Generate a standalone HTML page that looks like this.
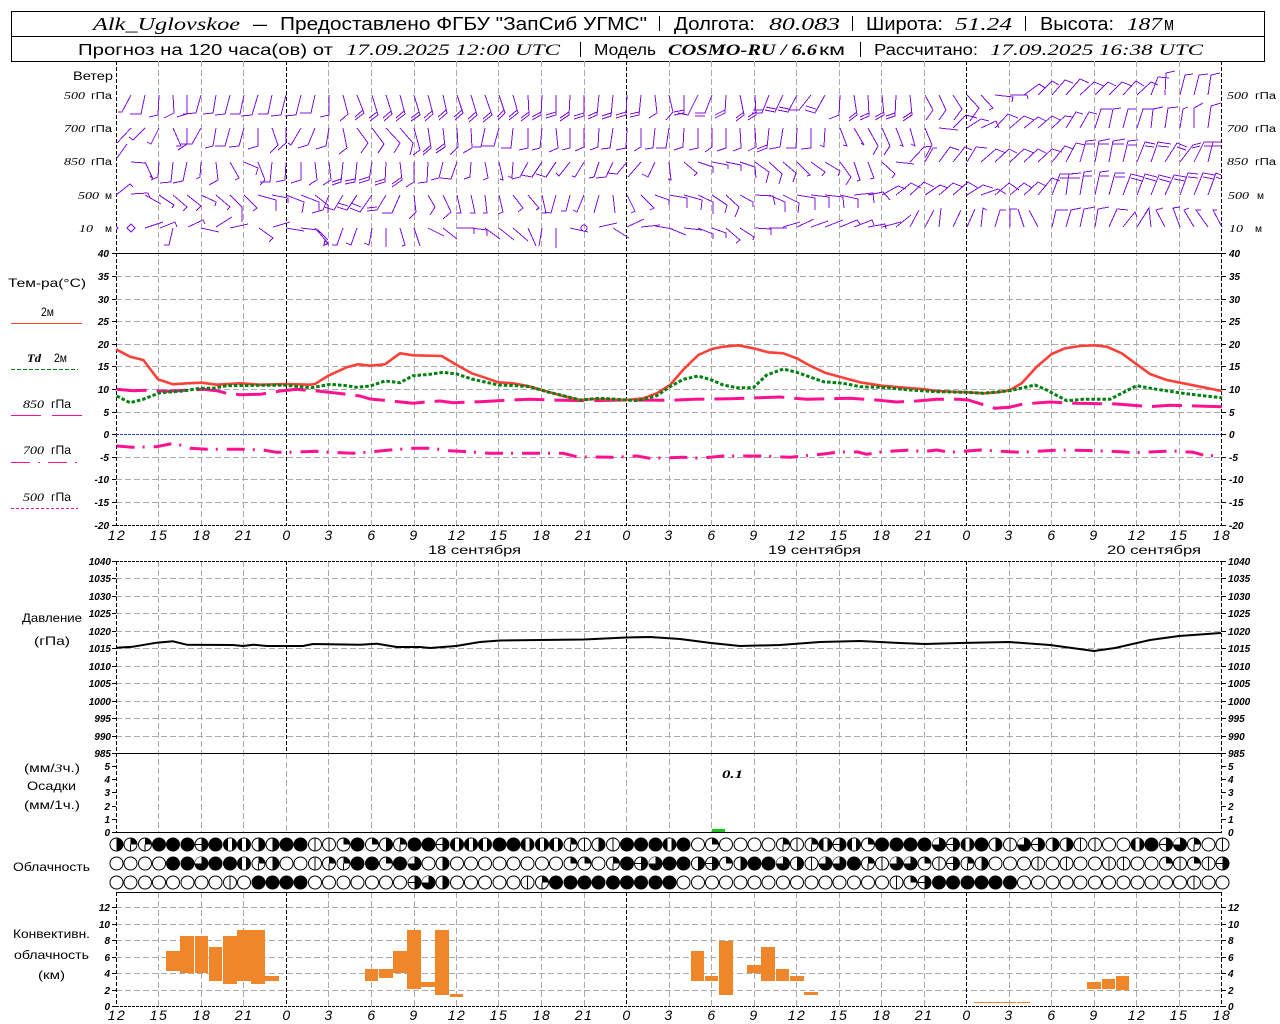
<!DOCTYPE html>
<html lang="ru"><head><meta charset="utf-8"><title>Alk_Uglovskoe</title>
<style>
html,body{margin:0;padding:0;background:#fff}
svg{display:block}
text{font-family:"Liberation Sans",sans-serif;fill:#000}
.i{font-family:"Liberation Serif",serif;font-style:italic}
.h1{font-size:18px}.h2{font-size:16px}
.iy text{font-family:"Liberation Sans",sans-serif;font-style:italic;font-weight:bold;font-size:10px}
.hr text{font-family:"Liberation Sans",sans-serif;font-style:italic;font-size:14px;letter-spacing:1.5px;text-anchor:middle}
.l text{font-size:12px}
.w text{font-size:10px}
.c circle,.c path{shape-rendering:crispEdges}
</style></head><body>
<svg xmlns="http://www.w3.org/2000/svg" width="1280" height="1024" viewBox="0 0 1280 1024">
<defs>
<clipPath id="wc"><rect x="116" y="61" width="1107" height="192"/></clipPath>
<path id="gv" d="M0 61V525M0 561V832M0 892V1006" fill="none" stroke="#aaa" stroke-dasharray="6 3" shape-rendering="crispEdges"/>
<g id="a"><circle r="6.5" fill="#fff" stroke="#000"/></g>
<g id="b"><circle r="6.5" fill="#fff" stroke="#000"/><path d="M0-6.5V6.5" stroke="#000"/></g>
<g id="c"><circle r="6.5" fill="#fff" stroke="#000"/><path d="M0 0V-6.5A6.5 6.5 0 0 1 6.5 0Z"/></g>
<g id="d"><circle r="6.5" fill="#fff" stroke="#000"/><path d="M0 0V-6.5A6.5 6.5 0 0 1 6.5 0Z"/><path d="M0 0V6.5" stroke="#000"/></g>
<g id="e"><circle r="6.5" fill="#fff" stroke="#000"/><path d="M0-6.5A6.5 6.5 0 0 1 0 6.5Z"/></g>
<g id="f"><circle r="6.5" fill="#fff" stroke="#000"/><path d="M0-6.5A6.5 6.5 0 0 1 0 6.5Z"/><path d="M-6.5 0H0" stroke="#000"/></g>
<g id="g"><circle r="6.5" fill="#000" stroke="#000"/><path d="M0 0V-6.5A6.5 6.5 0 0 0 -6.5 0Z" fill="#fff"/></g>
<g id="h"><circle r="6.5" fill="#000" stroke="#000"/><rect x="-2" y="-6" width="4" height="12" fill="#fff"/></g>
<g id="k"><circle r="6.5" fill="#000" stroke="#000"/></g>
</defs>

<!-- header -->
<g fill="none" stroke="#000" shape-rendering="crispEdges"><rect x="11.5" y="11.5" width="1253" height="50"/><path d="M11.5 36.5H1264.5M659.5 16V31M852.5 16V31M1025.5 16V31M580.5 42V57M860.5 42V57"/></g>
<text class="h1 i" x="93" y="30" textLength="147" lengthAdjust="spacingAndGlyphs" font-size="19">Alk_Uglovskoe</text>
<text class="h1" x="253" y="30" textLength="14" lengthAdjust="spacingAndGlyphs">–</text>
<text class="h1" x="280" y="30" textLength="367" lengthAdjust="spacingAndGlyphs">Предоставлено ФГБУ "ЗапСиб УГМС"</text>
<text class="h1" x="674" y="30" textLength="81" lengthAdjust="spacingAndGlyphs">Долгота:</text>
<text class="h1 i" x="769" y="30" textLength="71" lengthAdjust="spacingAndGlyphs">80.083</text>
<text class="h1" x="866" y="30" textLength="77" lengthAdjust="spacingAndGlyphs">Широта:</text>
<text class="h1 i" x="955" y="30" textLength="57" lengthAdjust="spacingAndGlyphs">51.24</text>
<text class="h1" x="1040" y="30" textLength="74" lengthAdjust="spacingAndGlyphs">Высота:</text>
<text class="h1 i" x="1127" y="30" textLength="35" lengthAdjust="spacingAndGlyphs">187</text>
<text class="h1" x="1164" y="30" textLength="10" lengthAdjust="spacingAndGlyphs">м</text>
<text class="h2" x="78" y="55" textLength="255" lengthAdjust="spacingAndGlyphs">Прогноз на 120 часа(ов) от</text>
<text class="h2 i" x="346" y="55" textLength="214" lengthAdjust="spacingAndGlyphs">17.09.2025 12:00 UTC</text>
<text class="h2" x="594" y="55" textLength="62" lengthAdjust="spacingAndGlyphs">Модель</text>
<text class="h2 i" x="668" y="55" textLength="149" lengthAdjust="spacingAndGlyphs" font-weight="bold">COSMO-RU / 6.6</text>
<text class="h2" x="819" y="55" textLength="26" lengthAdjust="spacingAndGlyphs">км</text>
<text class="h2" x="874" y="55" textLength="104" lengthAdjust="spacingAndGlyphs">Рассчитано:</text>
<text class="h2 i" x="990" y="55" textLength="213" lengthAdjust="spacingAndGlyphs">17.09.2025 16:38 UTC</text>

<!-- grid -->
<use href="#gv" x="158.5"/><use href="#gv" x="201.5"/><use href="#gv" x="243.5"/><use href="#gv" x="328.5"/><use href="#gv" x="371.5"/><use href="#gv" x="414.5"/><use href="#gv" x="456.5"/><use href="#gv" x="498.5"/><use href="#gv" x="541.5"/><use href="#gv" x="584.5"/><use href="#gv" x="669.5"/><use href="#gv" x="711.5"/><use href="#gv" x="754.5"/><use href="#gv" x="796.5"/><use href="#gv" x="839.5"/><use href="#gv" x="881.5"/><use href="#gv" x="924.5"/><use href="#gv" x="1009.5"/><use href="#gv" x="1051.5"/><use href="#gv" x="1094.5"/><use href="#gv" x="1136.5"/><use href="#gv" x="1179.5"/>
<path d="M286.5 753V832M626.5 753V832M966.5 753V832" stroke="#aaa" stroke-dasharray="6 3" fill="none" shape-rendering="crispEdges"/>
<path fill="none" stroke="#aaa" stroke-dasharray="6 3" shape-rendering="crispEdges" d="M116 276.5H1221M116 299.5H1221M116 321.5H1221M116 344.5H1221M116 366.5H1221M116 389.5H1221M116 412.5H1221M116 457.5H1221M116 479.5H1221M116 502.5H1221M116 578.5H1221M116 596.5H1221M116 613.5H1221M116 631.5H1221M116 648.5H1221M116 666.5H1221M116 683.5H1221M116 701.5H1221M116 718.5H1221M116 736.5H1221M116 907.5H1221M116 924.5H1221M116 940.5H1221M116 957.5H1221M116 973.5H1221M116 990.5H1221"/>
<path fill="none" stroke="#000" stroke-dasharray="4 2" shape-rendering="crispEdges" d="M116.5 61V525M116.5 561V832M116.5 892V1006M286.5 61V525M286.5 561V753M286.5 892V1006M626.5 61V525M626.5 561V753M626.5 892V1006M966.5 61V525M966.5 561V753M966.5 892V1006M1221.5 61V525M1221.5 561V832M1221.5 892V1006"/>
<path fill="none" stroke="#000" stroke-dasharray="3 1" shape-rendering="crispEdges" d="M116 525.5H1222M116 561.5H1222M116 1006.5H1222"/>
<path fill="none" stroke="#000" shape-rendering="crispEdges" d="M112 253.5H1226M112 753.5H1226M112 832.5H1222M116 892.5H1222"/>
<path fill="none" stroke="#2040ff" stroke-dasharray="3 1" shape-rendering="crispEdges" d="M116 434.5H1221"/>
<path fill="none" stroke="#000" shape-rendering="crispEdges" d="M112 276.5h4M112 299.5h4M112 321.5h4M112 344.5h4M112 366.5h4M112 389.5h4M112 412.5h4M112 434.5h4M112 457.5h4M112 479.5h4M112 502.5h4M112 525.5h4M112 561.5h4M112 578.5h4M112 596.5h4M112 613.5h4M112 631.5h4M112 648.5h4M112 666.5h4M112 683.5h4M112 701.5h4M112 718.5h4M112 736.5h4M112 766.5h4M112 779.5h4M112 792.5h4M112 806.5h4M112 819.5h4M112 907.5h4M112 924.5h4M112 940.5h4M112 957.5h4M112 973.5h4M112 990.5h4M112 1006.5h4M1221 276.5h5M1221 299.5h5M1221 321.5h5M1221 344.5h5M1221 366.5h5M1221 389.5h5M1221 412.5h5M1221 434.5h5M1221 457.5h5M1221 479.5h5M1221 502.5h5M1221 525.5h5M1221 561.5h5M1221 578.5h5M1221 596.5h5M1221 613.5h5M1221 631.5h5M1221 648.5h5M1221 666.5h5M1221 683.5h5M1221 701.5h5M1221 718.5h5M1221 736.5h5M1221 766.5h5M1221 779.5h5M1221 792.5h5M1221 806.5h5M1221 819.5h5M1221 907.5h5M1221 924.5h5M1221 940.5h5M1221 957.5h5M1221 973.5h5M1221 990.5h5M1221 1006.5h5"/>

<!-- wind barbs -->
<g clip-path="url(#wc)" fill="none" stroke="#8010e0" shape-rendering="crispEdges">
<path d="M131 95l-9 17l-4 0M145 95l-4 19l-11 0M159 95l-1 20l-9 2M173 95l1 18l-10 5M187 95l0 19l-10 3M201 95l-5 18l-13 1M216 95l-3 18l-10 1M230 95l-5 19l-10 1M244 95l-4 19l-10 0M258 95l-6 20l-11 1M272 95l-4 19l-10 0M286 95l-5 20l-10 1M301 95l-5 20l-11 1M315 95l-4 18l-11 0M329 95l0 20l-9 2M343 95l5 19l-8 7M357 95l7 18l-9 7m8-10l-8 7M372 95l6 20l-8 6m7-9l-8 6M386 95l6 19l-8 7m7-10l-8 7M400 95l5 19l-9 7m8-10l-8 7M414 95l6 20l-9 6m8-9l-8 6M428 95l5 19l-8 7m7-10l-8 7M443 95l4 18l-8 7m7-10l-8 7M457 95l6 18l-8 7m7-10l-8 7M471 95l6 20l-8 7m7-10l-8 7M485 95l7 20l-9 7m8-10l-8 7M499 95l6 18l-7 7m6-10l-7 7M513 95l5 18l-9 7m8-10l-8 7M528 95l1 20l-8 6m8-9l-8 6M542 95l-1 20l-9 5m9-8l-9 5M556 95l0 20l-10 3m10-6l-10 3M570 95l-1 20l-9 6m9-9l-9 6M584 95l0 21l-10 3m10-6l-10 3M599 95l-2 20l-9 4m9-7l-9 4M613 95l-2 21l-9 3m9-6l-9 3M627 95l-1 20l-10 3m10-6l-10 3M641 95l-2 20l-9 2m9-5l-9 2M655 95l2 18l-8 5M669 95l4 17l-7 8M684 95l0 18l-10 2m10-5l-10 2M698 95l-10 20l-10-2M712 95l-7 18l-10 0m10 3l-10 0M726 95l-1 18l-10 5m10-8l-10 5M740 95l4 20l-8 6m8-9l-8 6M755 95l1 20l-8 5m8-8l-8 5M769 95l-7 18l-10 0m11-3l-10 0M783 95l-8 17l-10-2m11-1l-10-2M797 95l-9 17l-10-2m11-1l-10-2M811 95l-12 15l-10 0M825 95l-10 18l-10-3m11-1l-10-3M840 95l-1 20l-10 4M854 95l3 20l-8 6m8-9l-8 6M868 95l1 21l-9 4m9-7l-9 4M882 95l2 20l-9 5m9-8l-9 5M896 95l-1 21l-9 3m9-6l-9 3M910 95l2 20l-9 6m9-9l-9 6M925 95l8 15l-7 10M939 95l7 15l-7 10M953 95l9 14l-8 11M967 95l12 13l-9 13M981 95l12 13l-4 2M995 95l18 2l-1 5M1010 95l17 0l1 4M1024 95l15-11l6 4M1038 95l14-14l7 4M1052 95l13-15l8 3M1066 95l14-16l9 4M1080 95l14-13l10 4M1095 95l13-13l8 4M1109 95l13-13l10 4M1123 95l13-14l8 5M1137 95l14-13l7 3M1151 95l7-18l11 1M1165 95l1-22l9-2M1180 95l5-20l8-1M1194 95l5-20l9-1M1208 95l3-20l9-2"/>
<path d="M131 128l-14 15M127 144l-10 14M145 128l-12 12l-4-3M159 128l-8 16l-4-2M173 128l8 18l-5 0M187 128l0 16l-9 6M201 128l-9 16l-11 0M216 128l-3 18l-8 2M230 128l-5 18l-10 0M244 128l-5 18l-10 1M258 128l0 18l-10 3M272 128l6 17l-8 8M286 128l0 15l-8 7M301 128l-10 17l-3-2M315 128l-7 17l-10 3M329 128l-3 18l-10 3M343 128l4 20l-8 6M357 128l11 15l-7 10M372 128l12 16l-6 9M386 128l14 15l-6 10M400 128l13 15l-3 12M414 128l6 22l-7 5M428 128l3 20l-8 7m8-10l-8 7M443 128l2 19l-9 6m8-9l-8 6M457 128l1 19l-8 8M471 128l1 20l-9 5M485 128l-4 19l-8 0M499 128l-5 18l-12 0M513 128l-2 20l-10 0M528 128l0 20l-9 2M542 128l-2 20l-8 2M556 128l2 20l-9 4M570 128l0 20l-8 2M584 128l0 19l-9 4M599 128l-1 19l-8 3M613 128l-3 20l-9 1M627 128l-1 20l-10 2M641 128l0 19l-7 4M655 128l-2 20l-8 1M669 128l-3 20l-10 0M684 128l-1 19l-9 3M698 128l0 20l-9 2M712 128l0 19l-7 5M726 128l0 20l-9 3M740 128l1 20l-8 3M755 128l1 19l-8 4M769 128l-2 20l-10 4m10-7l-10 4M783 128l-3 19l-11 2M797 128l-1 20l-10 0M811 128l0 20l-10 1M825 128l-1 19l-4-2M840 128l7 18l-4-1M854 128l10 17l-3-2M868 128l10 18l-5 9M882 128l8 18l-6 9M896 128l7 18l-3-1M910 128l5 18l-4-2M925 128l7 17l-7 13M939 128l19 2M953 128l13-13l11 3M967 128l14-9l8 2M981 128l15-7l3 7M995 128l13-14l10 4M1010 128l14-12l10 4M1024 128l14-11l8 4M1038 128l14-12l8 4M1052 128l13-12l8 1M1066 128l10-16l7 2M1080 128l9-16l8 2M1095 128l6-19l11 0M1109 128l4-19l8-1M1123 128l5-19l8 0M1137 128l6-19l10 0M1151 128l2-19l10-2M1165 128l3-20l10-1M1180 128l3-19l5-2M1194 128l0-20l9-5M1208 128l3-22l10-3"/>
<path d="M131 162l14 1M145 162l8 17l-3-3M159 162l-1 15l-7 3M173 162l-2 20l-11 1M187 162l-4 19l-10 2M201 162l-1 15l-4 2M216 162l2 18l-9 5M230 162l9 16l-4 2M244 162l14 6l-2 7M258 162l7 18l-5 5M272 162l-2 20l-10 0M286 162l-1 18l-9 2M301 162l0 18l-10 3M315 162l2 18l-8 5M329 162l2 18l-8 5M343 162l-2 20l-9 3m9-6l-9 3M357 162l-2 20l-10 2m10-5l-10 2M372 162l-3 18l-10 3m10-6l-10 3M386 162l-1 20l-10 3m10-6l-10 3M400 162l2 18l-10 7m10-10l-10 7M414 162l0 20l-8 5M428 162l-1 20l-9 1M443 162l-4 16l-8 2M457 162l-6 17l-11-1M471 162l-1 15l-6 2M485 162l3 16l-5 2M499 162l4 18l-3-1M513 162l-1 16l-4-2M528 162l-8 15l-8 2M542 162l-10 15l-11-2M556 162l-10 15l-10-3M570 162l-11 14l-3-3M584 162l-9 15l-3-1M599 162l-5 15l-5 1M613 162l-7 15l-10 1M627 162l-10 12l-10-1M641 162l-13 15M655 162l-7 15l-6-3M669 162l2 18l-3-1M684 162l13 11l-3 3M698 162l15 5l0 6M712 162l16 3l0 4M726 162l15 3l0 6M740 162l15 5l1 11M755 162l14 10l-3 11M769 162l13 12l-3 10M783 162l13 11l-3 9M797 162l13 13l-3 1M811 162l14 10l-3 4M825 162l15 9l-2 5M840 162l11 15l-5 8M854 162l6 18l-3 1M868 162l6 16l-4 1M882 162l13 12l-3 4M896 162l18 2M910 162l14-15l8-1M925 162l8-14l4 0M939 162l11-15l9 3M953 162l12-15l7 3M967 162l9-15l11 1M981 162l15-13l10 4M995 162l14-13l8 4M1010 162l14-13l10 4M1024 162l14-13l8 4M1038 162l14-13l10 3M1052 162l13-16l8 3M1066 162l10-19l9 2M1080 162l6-21l10-1m-10 4l9 0M1095 162l4-21l11-2m-11 5l10 0M1109 162l4-21l12-2m-12 5l11 0M1123 162l5-21l10-1m-10 5l9 0M1137 162l8-20l10 2m-10 2l9 1M1151 162l7-20l13 2m-13 2l11 1M1165 162l12-19l10 4m-10 0l9 3M1180 162l13-17l8-2m-9 5l8-2M1194 162l10-20l11 0m-11 4l10 0M1208 162l5-20l8 0m-8 4l8 0"/>
<path d="M116 195l14-11l3 3M131 194l17-1l2 5M145 195l16 9M159 195l15 10l-2 3M173 195l14 12l-4 4M187 195l14 11l-5 5M201 195l15 7l-1 4M216 195l14 12l-3 3M230 195l12 12l0 15M244 195l13 13l-4 3M258 195l18 5l0 11M272 195l16 3l0 5M286 195l18 7l-2 11M301 195l18 7l0 9M315 195l13 10l0 8M329 195l-6 15l-11 3M343 195l-9 15l-10-3M357 195l-10 15l-10-3m11-1l-10-3M372 195l-12 17l-10-4m11-1l-10-4M386 195l-9 15l-10 1m10-4l-10 1M400 195l-8 18l-10 0M414 195l2 17l-7 7M428 195l7 12l-5 8M443 195l8 17l-8 7M457 195l4 18l-5 0M471 195l4 18l-5 0M485 195l2 18l-4 0M499 195l4 17l-5 2M513 195l10 13l-5 4M528 195l11 13l-3 2M542 195l4 18l-5 0M556 195l-5 18l-6-1M570 195l-4 16l-5 0M584 195l-7 17l-4-2M599 195l-5 18M613 195l2 18M627 195l8 16l-4 2M641 195l13 13l-4 2M655 195l14 5l0 5M669 195l18 3l0 10M684 195l18 5l-1 10M698 195l15 7l0 12M712 195l15 10l-2 8M726 195l13 12l-4 10M740 195l13 7l0 5M755 195l18 1l2 9M769 195l16 7l0 10M783 195l16 8l-1 10M797 195l18 3l0 12M811 195l18 2l0 11M825 195l18 2l1 11M840 195l18 4l0 9M854 195l19-2l1 10M868 195l15-3l7 8M882 195l16-9l8 3M896 195l15-12l10 5M910 195l14-13l10 5M925 195l15-10l8 3M939 195l14-12l10 4M953 195l15-13l10 6M967 195l16-10l10 3M981 195l17-6l8 5M995 195l14-12l10 7M1010 195l14-12l8 5M1024 195l14-13l8 4M1038 195l14-17l8 3M1052 195l8-21l13 0m-13 4l12 0M1066 195l3-21l12-1m-12 5l11 0M1080 195l4-23l8-1m-8 5l8 0M1095 195l5-23l9-1m-9 5l9 0M1109 195l6-22l10 0m-10 4l10 0M1123 195l8-21l12 3m-12 1l11 3M1137 195l8-21l12 3m-12 1l11 3M1151 195l8-20l12 3m-12 1l11 3M1165 195l9-20l12 2m-12 2l11 2M1180 195l8-22l10 1m-10 3l10 1M1194 195l9-22l12 2m-12 2l11 2M1208 195l8-22l5 2m-5 2l5 2"/>
<path d="M145 228l18-6M160 228l15-6l2 5M173 228l-4 17l-5 0M188 227l15-7l2 4M201 228l18 4M216 227l16-10M230 228l18-4M259 228l14 10l-4 4M273 227l17-5M286 228l18 3M301 228l17 2l10 10M315 228l13 15l-5 3M343 228l-6 17l-5 0M357 228l-6 17l-5-2M372 228l-3 17l-5-2M386 228l0 19M400 228l5 17l-3 1M414 228l6 18M428 228l16 8M443 228l14 11M457 228l17 0l0 6M471 228l16 2l0 6M485 228l15 11M499 228l15 12M513 228l15 13M528 228l8 18M542 228l-3 18M556 228l0 20M570 228l18 4M599 227l18-4M613 228l16 10M627 227l17-8M641 227l19-2M655 226l18 3M669 228l17 7M684 228l18 2M698 228l15 6l0 5M712 228l14 5l0 5M726 228l14 12l-4 3M740 228l14 9l-1 3M755 228l16 1l0 6M769 228l18 0M783 227l17-5M797 227l17-8M811 227l17-6M825 227l18-7M840 227l17-7l3 4M854 227l18-7l2 5M868 227l17-3l1 5M882 227l19-5M896 227l15-12M910 227l9-17M925 227l9-17M939 227l2-19M953 227l8-17M967 227l8-18M981 227l2-19l4 2M995 227l5-17l6 0M1010 227l0-18l7 0M1024 227l-6-18M1038 227l-9-17M1052 227l4-17l12 0M1066 227l5-17l10-2M1080 227l4-18l11-2M1095 227l3-18l11-2M1109 227l8-18l11 1M1123 227l12-15l2 5M1137 227l12-19M1151 227l-2-19l-4 6M1165 227l-9-17l7-2M1180 227l-7-19l7-1M1194 227l-10-17l5-2M1208 227l-12-17l5 0M1222 227l-9-17l4 0"/>
<path d="M116 226l2 2l-2 2M131 224l4 4l-4 4l-4-4zM584 228m-3 0a3 3 0 1 0 6 0a3 3 0 1 0-6 0M325 240l3 4l-4 1z"/>
</g>

<!-- wind labels -->
<g class="l"><text x="73" y="80" textLength="40" lengthAdjust="spacingAndGlyphs">Ветер</text></g>
<g class="w">
<text class="i" x="64" y="99" textLength="21" lengthAdjust="spacingAndGlyphs">500</text><text x="91" y="99" textLength="21" lengthAdjust="spacingAndGlyphs">гПа</text>
<text class="i" x="64" y="132" textLength="21" lengthAdjust="spacingAndGlyphs">700</text><text x="91" y="132" textLength="21" lengthAdjust="spacingAndGlyphs">гПа</text>
<text class="i" x="64" y="165" textLength="21" lengthAdjust="spacingAndGlyphs">850</text><text x="91" y="165" textLength="21" lengthAdjust="spacingAndGlyphs">гПа</text>
<text class="i" x="78" y="199" textLength="21" lengthAdjust="spacingAndGlyphs">500</text><text x="105" y="199" textLength="7" lengthAdjust="spacingAndGlyphs">м</text>
<text class="i" x="79" y="232" textLength="14" lengthAdjust="spacingAndGlyphs">10</text><text x="105" y="232" textLength="7" lengthAdjust="spacingAndGlyphs">м</text>
<text class="i" x="1227" y="99" textLength="21" lengthAdjust="spacingAndGlyphs">500</text><text x="1255" y="99" textLength="21" lengthAdjust="spacingAndGlyphs">гПа</text>
<text class="i" x="1227" y="132" textLength="21" lengthAdjust="spacingAndGlyphs">700</text><text x="1255" y="132" textLength="21" lengthAdjust="spacingAndGlyphs">гПа</text>
<text class="i" x="1227" y="165" textLength="21" lengthAdjust="spacingAndGlyphs">850</text><text x="1255" y="165" textLength="21" lengthAdjust="spacingAndGlyphs">гПа</text>
<text class="i" x="1228" y="199" textLength="21" lengthAdjust="spacingAndGlyphs">500</text><text x="1257" y="199" textLength="7" lengthAdjust="spacingAndGlyphs">м</text>
<text class="i" x="1229" y="232" textLength="14" lengthAdjust="spacingAndGlyphs">10</text><text x="1255" y="232" textLength="7" lengthAdjust="spacingAndGlyphs">м</text>
</g>

<!-- temperature lines -->
<g fill="none" stroke-linejoin="round">
<path stroke="#ff1090" stroke-width="3" stroke-dasharray="18 8 2 9" d="M116.7 446L133 447.3L156.7 446.7L170 444L180 445L190 448.3L206.7 449.3L243.3 449.3L263 450L276.7 452.3L290 452.3L316.7 451.3L328.3 452.3L353.3 453.3L366.7 452.3L390 450L413.3 448.3L430 448.3L450 450.7L466.7 451.7L490 453.3L536.7 453.3L563.3 453.3L576.7 456.7L613.3 457.3L636.7 456L650 458.3L683.3 457.3L700 458.3L723.3 456L763.3 456L790 457.3L823.3 454L838.3 452L858 452L866.7 454.3L883 451.7L910 450L921.7 451.7L936.7 450L950 452.3L980 450L1020 452.3L1060 450L1096.7 450.7L1120 451.7L1133 452.7L1171.7 451L1193.3 452.3L1206.7 456L1221.7 455"/>
<path stroke="#ff1090" stroke-width="3" stroke-dasharray="30 10" d="M116.7 389.3L133 390.7L146.7 390.3L166.7 391.3L185 390.3L203 389.3L216.7 390.7L226.7 393.3L240 394.7L260 394.3L266.7 393.3L278.3 391.3L296.7 389.3L320 391.3L346.7 394.3L360 396L370 399L388.3 400.7L413 403.3L428.3 401.7L440 401L453.3 402.7L480 401.7L510 400L530 399.3L550 400L586.7 400.7L626.7 400L670 400.3L693.3 399.3L730 398.7L780 397L806.7 399.3L850 398.3L876.7 400L896.7 402L916.7 401L936.7 399.3L958 399.3L968.3 400L995 408.3L1009.3 407.3L1023 404L1050 402L1076.7 403.3L1116.7 404L1150 406.7L1170 405.3L1221.7 406.7"/>
<path stroke="#ff4038" stroke-width="2.6" d="M116 349.3L130 356.7L143.3 360L158 379.3L173 384.3L186.7 383.3L201.7 382.7L216.7 384.7L240 383.3L260 384.7L286.7 384L310 384.7L315 384L328.3 375.7L346.7 367.3L358.3 364.3L370 365.7L385 364.3L400 353.3L413.3 355.3L441.7 356L456.7 365L471.7 373.3L485 377.7L498.3 382.3L513 383.3L528 386L541.7 390L563 396L580 400L596.7 399L626.7 400L643 398.3L656.7 393.3L670 385L683 370L698.3 355L711.7 349L723.3 346.7L738.3 345.3L753.3 348.3L768.3 352.3L783.3 353.3L796.7 358.3L810 365.7L825 372.7L843.3 377.7L860 382.3L881.7 385.7L900 387.3L925 389.3L936.7 391L966.7 392.3L983.3 393.3L998.3 392.3L1010 390L1021.7 383.3L1036.7 366.7L1051.7 354L1065 348.3L1080 346L1095 345.3L1106.7 346.7L1121.7 353.3L1136.7 364.3L1150 374L1166.7 380L1183.3 383.3L1203.3 387.3L1221.7 391"/>
<path stroke="#008010" stroke-width="3" stroke-dasharray="3.5 2" d="M116.7 396L130 402.7L143 399.3L160 392.7L183 391L200 388.3L213 388.3L226.7 385.7L260 385.3L286.7 385.3L300 386.7L311.7 387.7L330 384.3L346.7 385.7L356.7 387.3L370 386L385 381L400 382.7L413 375.7L430 374.3L443 372.3L456.7 374L471.7 379L498.3 385L516.7 385.7L530 386.7L546.7 391.7L563.3 395.7L580 400L600 398.3L626.7 400L638 400.7L656.7 395.7L670 386.7L683.3 379.3L698.3 376L711.7 380L723.3 385L736.7 387.7L753.3 387.7L766.7 375L783.3 369L796.7 372.3L823.3 381.7L843.3 383.3L860 386.7L881.7 387.3L910 390L936.7 391.7L966.7 392.3L983 393.3L1010 390.7L1035 385L1046.7 390L1066.7 400.7L1083 399.3L1110 399.3L1121.7 393.3L1136.7 385.7L1156.7 389.3L1183 393.3L1203 395.7L1221.7 397.7"/>
<path stroke="#000" stroke-width="2" d="M116.7 647.7L133 646.7L156.7 642.7L173 641.3L186.7 644.7L233 645L243 646L253 644.7L266.7 646L303 646L313 644L360 644.7L376.7 643.7L396.7 647L420 647L430 648L456 646L480 642L500 640.5L541 640L584 639.5L626 637.5L650 637L680 639L711 643L740 646L780 645L820 642L860 641L900 643L925 644L960 643L1009 642L1050 645L1094 651L1115 648L1150 640L1179 636L1221 633"/>
</g>

<!-- y-axis labels -->
<g class="iy" text-anchor="end">
<text x="109" y="257">40</text><text x="109" y="280">35</text><text x="109" y="303">30</text><text x="109" y="325">25</text><text x="109" y="348">20</text><text x="109" y="370">15</text><text x="109" y="393">10</text><text x="109" y="416">5</text><text x="109" y="438">0</text><text x="109" y="461">-5</text><text x="109" y="483">-10</text><text x="109" y="506">-15</text><text x="109" y="529">-20</text>
<text x="111" y="565">1040</text><text x="111" y="582">1035</text><text x="111" y="600">1030</text><text x="111" y="617">1025</text><text x="111" y="635">1020</text><text x="111" y="652">1015</text><text x="111" y="670">1010</text><text x="111" y="687">1005</text><text x="111" y="705">1000</text><text x="111" y="722">995</text><text x="111" y="740">990</text><text x="111" y="757">985</text>
<text x="110" y="770">5</text><text x="110" y="783">4</text><text x="110" y="796">3</text><text x="110" y="810">2</text><text x="110" y="823">1</text><text x="110" y="836">0</text>
<text x="110" y="911">12</text><text x="110" y="928">10</text><text x="110" y="944">8</text><text x="110" y="961">6</text><text x="110" y="977">4</text><text x="110" y="994">2</text><text x="110" y="1010">0</text>
</g>
<g class="iy">
<text x="1229" y="257">40</text><text x="1229" y="280">35</text><text x="1229" y="303">30</text><text x="1229" y="325">25</text><text x="1229" y="348">20</text><text x="1229" y="370">15</text><text x="1229" y="393">10</text><text x="1229" y="416">5</text><text x="1229" y="438">0</text><text x="1229" y="461">-5</text><text x="1229" y="483">-10</text><text x="1229" y="506">-15</text><text x="1229" y="529">-20</text>
<text x="1228" y="565">1040</text><text x="1228" y="582">1035</text><text x="1228" y="600">1030</text><text x="1228" y="617">1025</text><text x="1228" y="635">1020</text><text x="1228" y="652">1015</text><text x="1228" y="670">1010</text><text x="1228" y="687">1005</text><text x="1228" y="705">1000</text><text x="1228" y="722">995</text><text x="1228" y="740">990</text><text x="1228" y="757">985</text>
<text x="1228" y="770">5</text><text x="1228" y="783">4</text><text x="1228" y="796">3</text><text x="1228" y="810">2</text><text x="1228" y="823">1</text><text x="1228" y="836">0</text>
<text x="1228" y="911">12</text><text x="1228" y="928">10</text><text x="1228" y="944">8</text><text x="1228" y="961">6</text><text x="1228" y="977">4</text><text x="1228" y="994">2</text><text x="1228" y="1010">0</text>
</g>

<!-- hour labels -->
<g class="hr">
<text x="117" y="540">12</text><text x="159" y="540">15</text><text x="202" y="540">18</text><text x="244" y="540">21</text><text x="287" y="540">0</text><text x="329" y="540">3</text><text x="372" y="540">6</text><text x="414" y="540">9</text><text x="457" y="540">12</text><text x="499" y="540">15</text><text x="542" y="540">18</text><text x="584" y="540">21</text><text x="627" y="540">0</text><text x="669" y="540">3</text><text x="712" y="540">6</text><text x="754" y="540">9</text><text x="797" y="540">12</text><text x="839" y="540">15</text><text x="882" y="540">18</text><text x="924" y="540">21</text><text x="967" y="540">0</text><text x="1009" y="540">3</text><text x="1052" y="540">6</text><text x="1094" y="540">9</text><text x="1137" y="540">12</text><text x="1179" y="540">15</text><text x="1222" y="540">18</text>
<text x="117" y="1020">12</text><text x="159" y="1020">15</text><text x="202" y="1020">18</text><text x="244" y="1020">21</text><text x="287" y="1020">0</text><text x="329" y="1020">3</text><text x="372" y="1020">6</text><text x="414" y="1020">9</text><text x="457" y="1020">12</text><text x="499" y="1020">15</text><text x="542" y="1020">18</text><text x="584" y="1020">21</text><text x="627" y="1020">0</text><text x="669" y="1020">3</text><text x="712" y="1020">6</text><text x="754" y="1020">9</text><text x="797" y="1020">12</text><text x="839" y="1020">15</text><text x="882" y="1020">18</text><text x="924" y="1020">21</text><text x="967" y="1020">0</text><text x="1009" y="1020">3</text><text x="1052" y="1020">6</text><text x="1094" y="1020">9</text><text x="1137" y="1020">12</text><text x="1179" y="1020">15</text><text x="1222" y="1020">18</text>
</g>
<g class="l">
<text x="428" y="554" textLength="93" lengthAdjust="spacingAndGlyphs">18 сентября</text>
<text x="768" y="554" textLength="93" lengthAdjust="spacingAndGlyphs">19 сентября</text>
<text x="1107" y="554" textLength="94" lengthAdjust="spacingAndGlyphs">20 сентября</text>

<text x="8" y="287" textLength="78" lengthAdjust="spacingAndGlyphs">Тем-ра(°С)</text>
<text x="41" y="316" textLength="13" lengthAdjust="spacingAndGlyphs" font-size="11">2м</text>
<text class="i" x="27" y="362" textLength="14" lengthAdjust="spacingAndGlyphs" font-weight="bold">Td</text>
<text x="54" y="362" textLength="13" lengthAdjust="spacingAndGlyphs" font-size="11">2м</text>
<text class="i" x="23" y="408" textLength="21" lengthAdjust="spacingAndGlyphs">850</text><text x="51" y="408" textLength="20" lengthAdjust="spacingAndGlyphs" font-size="11">гПа</text>
<text class="i" x="23" y="454" textLength="21" lengthAdjust="spacingAndGlyphs">700</text><text x="51" y="454" textLength="20" lengthAdjust="spacingAndGlyphs" font-size="11">гПа</text>
<text class="i" x="23" y="501" textLength="21" lengthAdjust="spacingAndGlyphs">500</text><text x="51" y="501" textLength="20" lengthAdjust="spacingAndGlyphs" font-size="11">гПа</text>
<text x="22" y="622" textLength="60" lengthAdjust="spacingAndGlyphs">Давление</text>
<text x="34" y="645" textLength="36" lengthAdjust="spacingAndGlyphs" font-size="13">(гПа)</text>
<text x="24" y="772" textLength="56" lengthAdjust="spacingAndGlyphs">(мм/<tspan class="i">3</tspan>ч.)</text>
<text x="27" y="790" textLength="49" lengthAdjust="spacingAndGlyphs">Осадки</text>
<text x="24" y="809" textLength="56" lengthAdjust="spacingAndGlyphs">(мм/1ч.)</text>
<text x="13" y="871" textLength="77" lengthAdjust="spacingAndGlyphs">Облачность</text>
<text x="13" y="938" textLength="77" lengthAdjust="spacingAndGlyphs">Конвективн.</text>
<text x="14" y="959" textLength="75" lengthAdjust="spacingAndGlyphs">облачность</text>
<text x="38" y="979" textLength="27" lengthAdjust="spacingAndGlyphs">(км)</text>
<text class="i" x="722" y="778" textLength="21" lengthAdjust="spacingAndGlyphs" font-weight="bold">0.1</text>
</g>

<!-- legend lines -->
<g fill="none" shape-rendering="crispEdges">
<path stroke="#ff4038" d="M11 323.5H82"/>
<path stroke="#008010" stroke-dasharray="4 2" d="M11 369.5H78"/>
<path stroke="#ff1090" d="M11 415.5H41M52 415.5H82M11 462.5H30M38 462.5H40M48 462.5H67M75 462.5H77"/>
<path stroke="#ff1090" stroke-dasharray="3 2" d="M11 508.5H78"/>
</g>

<!-- precip -->
<rect x="712" y="829" width="13" height="3" fill="#18c818"/>

<!-- clouds -->
<g class="c" transform="translate(0,844.5)">
<use href="#e" x="116.5"/><use href="#d" x="130.5"/><use href="#d" x="145"/><use href="#k" x="159"/><use href="#k" x="173"/><use href="#k" x="187.5"/><use href="#f" x="201.5"/><use href="#k" x="215.5"/><use href="#h" x="230"/><use href="#h" x="244"/><use href="#e" x="258.5"/><use href="#e" x="272.5"/><use href="#k" x="286.5"/><use href="#k" x="300.5"/><use href="#b" x="315"/><use href="#b" x="329"/><use href="#c" x="343.5"/><use href="#k" x="357.5"/><use href="#c" x="372"/><use href="#e" x="386"/><use href="#d" x="400"/><use href="#k" x="414.5"/><use href="#k" x="428.5"/><use href="#f" x="442.5"/><use href="#h" x="457"/><use href="#h" x="471"/><use href="#h" x="485"/><use href="#k" x="499.5"/><use href="#k" x="513.5"/><use href="#h" x="527.5"/><use href="#h" x="542"/><use href="#h" x="556"/><use href="#d" x="570.5"/><use href="#b" x="584.5"/><use href="#e" x="598.5"/><use href="#b" x="613"/><use href="#k" x="627"/><use href="#k" x="641"/><use href="#k" x="655.5"/><use href="#h" x="669.5"/><use href="#k" x="683.5"/><use href="#a" x="698"/><use href="#c" x="712"/><use href="#a" x="726"/><use href="#a" x="740.5"/><use href="#a" x="754.5"/><use href="#a" x="768.5"/><use href="#d" x="783"/><use href="#b" x="797"/><use href="#d" x="811.5"/><use href="#h" x="825.5"/><use href="#f" x="839.5"/><use href="#h" x="854"/><use href="#c" x="868"/><use href="#k" x="882"/><use href="#k" x="896.5"/><use href="#k" x="910.5"/><use href="#k" x="924.5"/><use href="#g" x="939"/><use href="#f" x="953"/><use href="#h" x="967.5"/><use href="#k" x="981.5"/><use href="#e" x="995.5"/><use href="#b" x="1010"/><use href="#g" x="1024"/><use href="#f" x="1038"/><use href="#e" x="1052.5"/><use href="#e" x="1066.5"/><use href="#b" x="1080.5"/><use href="#b" x="1095"/><use href="#a" x="1109"/><use href="#a" x="1123.5"/><use href="#h" x="1137.5"/><use href="#k" x="1151.5"/><use href="#f" x="1166"/><use href="#g" x="1180"/><use href="#d" x="1194"/><use href="#a" x="1208.5"/><use href="#b" x="1222.5"/>
</g>
<g class="c" transform="translate(0,863.5)">
<use href="#a" x="116.5"/><use href="#a" x="130.5"/><use href="#a" x="145"/><use href="#a" x="159"/><use href="#k" x="173"/><use href="#k" x="187.5"/><use href="#g" x="201.5"/><use href="#k" x="215.5"/><use href="#k" x="230"/><use href="#h" x="244"/><use href="#d" x="258.5"/><use href="#e" x="272.5"/><use href="#a" x="286.5"/><use href="#a" x="300.5"/><use href="#b" x="315"/><use href="#d" x="329"/><use href="#d" x="343.5"/><use href="#k" x="357.5"/><use href="#k" x="372"/><use href="#c" x="386"/><use href="#k" x="400"/><use href="#g" x="414.5"/><use href="#a" x="428.5"/><use href="#e" x="442.5"/><use href="#a" x="457"/><use href="#a" x="471"/><use href="#a" x="485"/><use href="#a" x="499.5"/><use href="#a" x="513.5"/><use href="#a" x="527.5"/><use href="#a" x="542"/><use href="#a" x="556"/><use href="#c" x="570.5"/><use href="#c" x="584.5"/><use href="#a" x="598.5"/><use href="#d" x="613"/><use href="#k" x="627"/><use href="#f" x="641"/><use href="#g" x="655.5"/><use href="#k" x="669.5"/><use href="#k" x="683.5"/><use href="#e" x="698"/><use href="#f" x="712"/><use href="#c" x="726"/><use href="#e" x="740.5"/><use href="#k" x="754.5"/><use href="#k" x="768.5"/><use href="#g" x="783"/><use href="#e" x="797"/><use href="#b" x="811.5"/><use href="#g" x="825.5"/><use href="#g" x="839.5"/><use href="#k" x="854"/><use href="#d" x="868"/><use href="#b" x="882"/><use href="#g" x="896.5"/><use href="#g" x="910.5"/><use href="#c" x="924.5"/><use href="#b" x="939"/><use href="#f" x="953"/><use href="#d" x="967.5"/><use href="#e" x="981.5"/><use href="#a" x="995.5"/><use href="#a" x="1010"/><use href="#a" x="1024"/><use href="#b" x="1038"/><use href="#a" x="1052.5"/><use href="#b" x="1066.5"/><use href="#a" x="1080.5"/><use href="#a" x="1095"/><use href="#b" x="1109"/><use href="#b" x="1123.5"/><use href="#a" x="1137.5"/><use href="#a" x="1151.5"/><use href="#c" x="1166"/><use href="#b" x="1180"/><use href="#c" x="1194"/><use href="#b" x="1208.5"/><use href="#f" x="1222.5"/>
</g>
<g class="c" transform="translate(0,882.5)">
<use href="#a" x="116.5"/><use href="#a" x="130.5"/><use href="#a" x="145"/><use href="#a" x="159"/><use href="#a" x="173"/><use href="#a" x="187.5"/><use href="#a" x="201.5"/><use href="#a" x="215.5"/><use href="#b" x="230"/><use href="#a" x="244"/><use href="#k" x="258.5"/><use href="#k" x="272.5"/><use href="#k" x="286.5"/><use href="#k" x="300.5"/><use href="#a" x="315"/><use href="#a" x="329"/><use href="#a" x="343.5"/><use href="#a" x="357.5"/><use href="#a" x="372"/><use href="#a" x="386"/><use href="#a" x="400"/><use href="#f" x="414.5"/><use href="#g" x="428.5"/><use href="#e" x="442.5"/><use href="#a" x="457"/><use href="#a" x="471"/><use href="#a" x="485"/><use href="#a" x="499.5"/><use href="#a" x="513.5"/><use href="#b" x="527.5"/><use href="#d" x="542"/><use href="#k" x="556"/><use href="#k" x="570.5"/><use href="#k" x="584.5"/><use href="#k" x="598.5"/><use href="#k" x="613"/><use href="#k" x="627"/><use href="#k" x="641"/><use href="#k" x="655.5"/><use href="#k" x="669.5"/><use href="#a" x="683.5"/><use href="#a" x="698"/><use href="#a" x="712"/><use href="#a" x="726"/><use href="#a" x="740.5"/><use href="#a" x="754.5"/><use href="#a" x="768.5"/><use href="#a" x="783"/><use href="#a" x="797"/><use href="#a" x="811.5"/><use href="#a" x="825.5"/><use href="#a" x="839.5"/><use href="#a" x="854"/><use href="#a" x="868"/><use href="#a" x="882"/><use href="#b" x="896.5"/><use href="#c" x="910.5"/><use href="#f" x="924.5"/><use href="#k" x="939"/><use href="#k" x="953"/><use href="#k" x="967.5"/><use href="#k" x="981.5"/><use href="#k" x="995.5"/><use href="#k" x="1010"/><use href="#a" x="1024"/><use href="#a" x="1038"/><use href="#a" x="1052.5"/><use href="#a" x="1066.5"/><use href="#a" x="1080.5"/><use href="#a" x="1095"/><use href="#a" x="1109"/><use href="#a" x="1123.5"/><use href="#a" x="1137.5"/><use href="#a" x="1151.5"/><use href="#a" x="1166"/><use href="#a" x="1180"/><use href="#b" x="1194"/><use href="#a" x="1208.5"/><use href="#a" x="1222.5"/>
</g>

<!-- convective bars -->
<g fill="#f0862a" shape-rendering="crispEdges">
<rect x="166" y="951" width="14" height="20"/><rect x="180" y="936" width="14" height="37"/><rect x="195" y="936" width="13" height="37"/><rect x="209" y="947" width="13" height="34"/><rect x="223" y="936" width="14" height="48"/><rect x="237" y="930" width="14" height="51"/><rect x="251" y="930" width="14" height="54"/><rect x="265" y="976" width="14" height="5"/>
<rect x="365" y="969" width="13" height="12"/><rect x="379" y="969" width="14" height="9"/><rect x="393" y="951" width="14" height="22"/><rect x="407" y="930" width="14" height="59"/><rect x="421" y="982" width="14" height="5"/><rect x="435" y="930" width="14" height="65"/><rect x="450" y="994" width="13" height="3"/>
<rect x="691" y="951" width="13" height="30"/><rect x="705" y="976" width="13" height="5"/><rect x="719" y="941" width="14" height="54"/><rect x="747" y="965" width="14" height="8"/><rect x="761" y="947" width="14" height="34"/><rect x="776" y="969" width="13" height="12"/><rect x="790" y="976" width="14" height="5"/><rect x="804" y="992" width="14" height="3"/>
<rect x="974" y="1002" width="42" height="1"/><rect x="1017" y="1002" width="13" height="1"/>
<rect x="1087" y="982" width="14" height="7"/><rect x="1102" y="979" width="13" height="10"/><rect x="1116" y="976" width="13" height="14"/>
</g>
</svg>
</body></html>
